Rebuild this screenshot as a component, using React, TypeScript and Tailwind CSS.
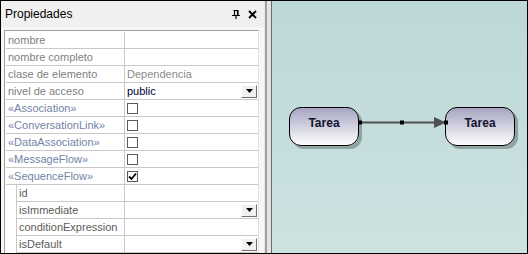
import { FC } from "react";

type Row = {
  label: string;
  kind: "plain" | "stereo" | "sub";
  value?: string;
  valueClass?: string;
  check?: boolean | "on";
  drop?: boolean;
};

const rows: Row[] = [
  { label: "nombre", kind: "plain" },
  { label: "nombre completo", kind: "plain" },
  { label: "clase de elemento", kind: "plain", value: "Dependencia", valueClass: "text-[#8a8a8a]" },
  { label: "nivel de acceso", kind: "plain", value: "public", valueClass: "text-[#000030]", drop: true },
  { label: "«Association»", kind: "stereo", check: true },
  { label: "«ConversationLink»", kind: "stereo", check: true },
  { label: "«DataAssociation»", kind: "stereo", check: true },
  { label: "«MessageFlow»", kind: "stereo", check: true },
  { label: "«SequenceFlow»", kind: "stereo", check: "on" },
  { label: "id", kind: "sub" },
  { label: "isImmediate", kind: "sub", drop: true },
  { label: "conditionExpression", kind: "sub" },
  { label: "isDefault", kind: "sub", drop: true },
];

const DropButton: FC = () => (
  <div className="ml-auto mr-[1px] w-[16px] h-[13px] bg-[#f0f0f0] border border-t-white border-l-white border-r-[#707070] border-b-[#707070] flex items-center justify-center">
    <svg width="7" height="4" viewBox="0 0 7 4">
      <polygon points="0,0 7,0 3.5,4" fill="#000" />
    </svg>
  </div>
);

const CheckBox: FC<{ on?: boolean }> = ({ on }) => (
  <div className="w-[11px] h-[11px] border border-[#5a5a5a] bg-white flex items-center justify-center">
    {on && (
      <svg width="9" height="9" viewBox="0 0 9 9">
        <path d="M1 4.5 L3.5 7 L8 1.5" stroke="#000" strokeWidth="1.8" fill="none" />
      </svg>
    )}
  </div>
);

const PropRow: FC<{ row: Row }> = ({ row }) => {
  const labelColor =
    row.kind === "stereo" ? "text-[#7283a5]" : row.kind === "sub" ? "text-[#5c5c5c]" : "text-[#808080]";
  return (
    <div className="flex h-[17px]">
      {row.kind === "sub" && <div className="w-[11px] shrink-0 border-r border-[#c8c8c8]" />}
      <div
        className={`flex items-center whitespace-nowrap overflow-hidden border-b border-r border-[#c8c8c8] pl-[2px] ${labelColor} ${
          row.kind === "sub" ? "w-[108px]" : "w-[119px]"
        }`}
      >
        {row.label}
      </div>
      <div className="flex-1 flex items-center border-b border-[#c8c8c8] pl-[2px]">
        {row.value && <span className={row.valueClass}>{row.value}</span>}
        {row.check && <CheckBox on={row.check === "on"} />}
        {row.drop && <DropButton />}
      </div>
    </div>
  );
};

const Node: FC<{ left: number }> = ({ left }) => (
  <div
    className="absolute top-[106px] w-[70px] h-[39px] rounded-[12px] border border-black bg-gradient-to-b from-[#a7a5c2] to-[#ffffff] shadow-[3px_3px_0_#8fa3a3] text-center pt-[8px] leading-[14px] text-[12px] font-bold text-[#14142e]"
    style={{ left }}
  >
    Tarea
  </div>
);

const App: FC = () => {
  return (
    <div className="w-[528px] h-[254px] border border-black flex overflow-hidden font-['Liberation_Sans',Arial,sans-serif] text-[11px] bg-[#f0f0f0]">
      <div className="w-[263px] shrink-0 flex flex-col">
        <div className="h-[26px] flex items-center px-[4px] text-[12px] text-black">
          <span>Propiedades</span>
          <div className="ml-auto flex items-center gap-[8px] pr-[3px]">
            <svg width="8" height="9" viewBox="0 0 8 9">
              <path d="M1.5 0.5 H6.5 M2.5 0.5 V5 M5.5 0.5 V5 M6 1 V5 M0 5.5 H8 M4 5.5 V9" stroke="#000" strokeWidth="1.2" fill="none" />
            </svg>
            <svg width="9" height="9" viewBox="0 0 9 9">
              <path d="M1 1 L8 8 M8 1 L1 8" stroke="#000" strokeWidth="1.8" />
            </svg>
          </div>
        </div>
        <div className="flex-1 bg-[#f7f7f7] pl-[3px] pt-[3px] pr-[5px]">
          <div className="h-full bg-white border-t border-l border-[#a0a0a0] border-r border-r-[#e0e0e0] pt-[1px] pl-[1px]">
            {rows.map((r, i) => (
              <PropRow row={r} key={i} />
            ))}
          </div>
        </div>
      </div>
      <div className="w-[7px] shrink-0 flex">
        <div className="w-[1px] bg-[#e8e8e8]" />
        <div className="w-[2px] bg-[#a0a0a0]" />
        <div className="w-[4px] bg-[#e4e4e4]" />
      </div>
      <div className="relative flex-1 border-l border-[#6a6a6a] bg-gradient-to-b from-[#bcd8d7] to-[#cde3e2]">
        <Node left={17} />
        <Node left={173} />
        <svg className="absolute left-0 top-0" width="256" height="252">
          <line x1="87" y1="121.5" x2="166" y2="121.5" stroke="#505050" strokeWidth="2" />
          <polygon points="162,116 174,121.5 162,127" fill="#505050" />
          <rect x="86" y="119.5" width="4" height="4" fill="#000" />
          <rect x="128" y="119.5" width="4" height="4" fill="#000" />
          <rect x="172" y="119.5" width="4" height="4" fill="#000" />
        </svg>
      </div>
    </div>
  );
};

export default App;
